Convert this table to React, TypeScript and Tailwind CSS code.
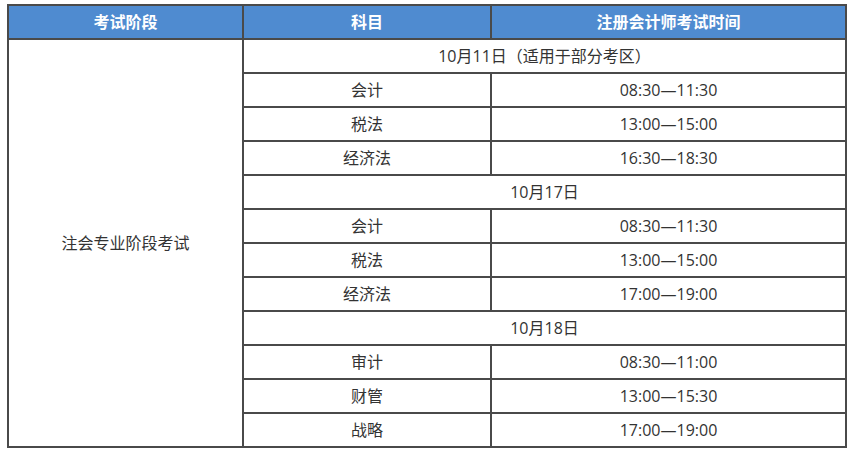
const rows: { date?: string; subject?: string; time?: string }[] = [
  { date: '10月11日（适用于部分考区）' },
  { subject: '会计', time: '08:30—11:30' },
  { subject: '税法', time: '13:00—15:00' },
  { subject: '经济法', time: '16:30—18:30' },
  { date: '10月17日' },
  { subject: '会计', time: '08:30—11:30' },
  { subject: '税法', time: '13:00—15:00' },
  { subject: '经济法', time: '17:00—19:00' },
  { date: '10月18日' },
  { subject: '审计', time: '08:30—11:00' },
  { subject: '财管', time: '13:00—15:30' },
  { subject: '战略', time: '17:00—19:00' },
]

const cell = 'border border-[#4a4a4a] h-[34px] p-0 text-center align-middle leading-none'

export default function App() {
  return (
    <div className="bg-white w-[852px] h-[453px] pt-[4px] pl-[7px]" style={{ fontFamily: '"Open Sans", "Noto Sans CJK SC", sans-serif' }}>
      <table className="border border-[#4a4a4a] border-separate border-spacing-0 w-[840px] table-fixed text-[16px] text-[#333]">
        <colgroup>
          <col className="w-[235px]" />
          <col className="w-[248px]" />
          <col />
        </colgroup>
        <thead>
          <tr className="bg-[#4f8bd0] text-white font-bold">
            <th className={cell}>考试阶段</th>
            <th className={cell}>科目</th>
            <th className={cell}>注册会计师考试时间</th>
          </tr>
        </thead>
        <tbody>
          {rows.map((r, i) => (
            <tr key={i}>
              {i === 0 && (
                <td rowSpan={rows.length} className={cell}>
                  注会专业阶段考试
                </td>
              )}
              {r.date ? (
                <td colSpan={2} className={cell}>{r.date}</td>
              ) : (
                <>
                  <td className={cell}>{r.subject}</td>
                  <td className={cell}>{r.time}</td>
                </>
              )}
            </tr>
          ))}
        </tbody>
      </table>
    </div>
  )
}
